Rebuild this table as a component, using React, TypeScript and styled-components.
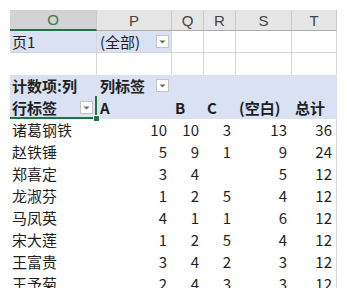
import React from 'react';
import styled, { createGlobalStyle } from 'styled-components';

const COLS = '87px 75px 32px 32px 56px 45px';
const LAVENDER = '#d9e1f2';
const GRID = '#d6d6d6';
const GREEN = '#217346';

const GlobalStyle = createGlobalStyle`
  body {
    margin: 0;
    background: #fff;
  }
`;

const Page = styled.div`
  padding: 10px;
`;

const Sheet = styled.div`
  width: 327px;
  height: 278px;
  overflow: hidden;
  font-family: 'Noto Sans CJK SC', 'Noto Sans', sans-serif;
  font-size: 15px;
  color: #1f1f1f;
`;

const HeaderRow = styled.div`
  display: grid;
  grid-template-columns: ${COLS};
  height: 21px;
`;

const ColHead = styled.div<{ $active?: boolean }>`
  display: flex;
  align-items: center;
  justify-content: center;
  box-sizing: border-box;
  background: ${p => (p.$active ? '#d3d3d3' : '#e6e6e6')};
  color: ${p => (p.$active ? '#3d7a55' : '#444')};
  border-right: 1px solid #c9c9c9;
  border-bottom: ${p => (p.$active ? `2px solid ${GREEN}` : '1px solid #adadad')};
  font-family: 'Liberation Sans', sans-serif;
  font-size: 15px;
`;

const Row = styled.div<{ $bg?: string }>`
  display: grid;
  grid-template-columns: ${COLS};
  height: 22px;
  background: ${p => p.$bg ?? '#fff'};
`;

type CellProps = {
  $right?: boolean;
  $bold?: boolean;
  $lines?: boolean;
  $edge?: boolean;
  $bg?: string;
  $first?: boolean;
};

const Cell = styled.div<CellProps>`
  position: relative;
  box-sizing: border-box;
  display: flex;
  align-items: center;
  justify-content: ${p => (p.$right ? 'flex-end' : 'flex-start')};
  padding: ${p => (p.$first ? '0 3px 0 2px' : '0 4px 0 3px')};
  background: ${p => p.$bg ?? 'transparent'};
  font-weight: ${p => (p.$bold ? 700 : 400)};
  border-right: 1px solid ${p => (p.$lines || p.$edge ? GRID : 'transparent')};
  border-bottom: 1px solid ${p => (p.$lines ? GRID : 'transparent')};
  white-space: nowrap;
  line-height: 1;
`;

const SelectedCell = styled(Cell)`
  &::after {
    content: '';
    position: absolute;
    inset: -1px -1px -1px -4px;
    border-right: 2px solid ${GREEN};
    border-bottom: 2px solid ${GREEN};
    pointer-events: none;
  }
`;

const FillHandle = styled.span`
  position: absolute;
  right: -4px;
  bottom: -4px;
  width: 5px;
  height: 5px;
  background: ${GREEN};
  border: 1px solid #fff;
  z-index: 1;
`;

const DropBtn = styled.span`
  margin-left: auto;
  width: 13px;
  height: 13px;
  box-sizing: border-box;
  border: 1px solid #c4c4c4;
  background: #fdfdfd;
  display: flex;
  align-items: center;
  justify-content: center;
`;

const DropDown = () => (
  <DropBtn>
    <svg width="7" height="4" viewBox="0 0 7 4">
      <path d="M0.5 0.5h6L3.5 3.5z" fill="#6b6b6b" />
    </svg>
  </DropBtn>
);

const data: [string, ...(number | null)[]][] = [
  ['诸葛钢铁', 10, 10, 3, 13, 36],
  ['赵铁锤', 5, 9, 1, 9, 24],
  ['郑喜定', 3, 4, null, 5, 12],
  ['龙淑芬', 1, 2, 5, 4, 12],
  ['马凤英', 4, 1, 1, 6, 12],
  ['宋大莲', 1, 2, 5, 4, 12],
  ['王富贵', 3, 4, 2, 3, 12],
  ['王予菊', 2, 4, 3, 3, 12],
];

export default function App() {
  return (
    <Page>
      <GlobalStyle />
      <Sheet>
        <HeaderRow>
          <ColHead $active>O</ColHead>
          <ColHead>P</ColHead>
          <ColHead>Q</ColHead>
          <ColHead>R</ColHead>
          <ColHead>S</ColHead>
          <ColHead>T</ColHead>
        </HeaderRow>

        <Row>
          <Cell $first $lines $bg={LAVENDER}>页1</Cell>
          <Cell $lines $bg={LAVENDER} style={{ paddingRight: 2 }}>
            (全部)
            <DropDown />
          </Cell>
          <Cell $lines />
          <Cell $lines />
          <Cell $lines />
          <Cell $lines />
        </Row>

        <Row>
          <Cell $first $edge />
          <Cell $edge />
          <Cell $edge />
          <Cell $edge />
          <Cell $edge />
          <Cell $edge />
        </Row>

        <Row $bg={LAVENDER}>
          <Cell $first $bold>计数项:列</Cell>
          <Cell $bold style={{ paddingRight: 2 }}>
            列标签
            <DropDown />
          </Cell>
          <Cell />
          <Cell />
          <Cell />
          <Cell />
        </Row>

        <Row $bg={LAVENDER}>
          <SelectedCell $first $bold>
            行标签
            <DropDown />
            <FillHandle />
          </SelectedCell>
          <Cell $bold>A</Cell>
          <Cell $bold>B</Cell>
          <Cell $bold>C</Cell>
          <Cell $bold>(空白)</Cell>
          <Cell $bold>总计</Cell>
        </Row>

        {data.map(([name, ...vals]) => (
          <Row key={name}>
            <Cell $first>{name}</Cell>
            {vals.map((v, i) => (
              <Cell key={i} $right $edge={i === vals.length - 1}>
                {v ?? ''}
              </Cell>
            ))}
          </Row>
        ))}
      </Sheet>
    </Page>
  );
}
